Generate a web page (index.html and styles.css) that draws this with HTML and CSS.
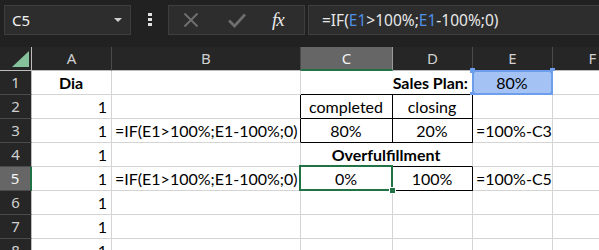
FILE: index.html
```html
<!DOCTYPE html>
<html lang="en">
<head>
  <meta charset="UTF-8">
  <title>Sales Plan</title>
  <link rel="stylesheet" href="styles.css">
</head>
<body>

<!-- Name box and formula bar -->
<div class="toolbar">
  <div class="namebox">
    <span>C5</span>
    <span class="caret"></span>
  </div>
  <div class="grip"><i></i><i></i><i></i></div>
  <div class="fx-buttons">
    <svg width="16" height="14" viewBox="0 0 16 14"><path d="M1.5 0.5 L14.5 13.5 M14.5 0.5 L1.5 13.5" stroke="#6e6e6e" stroke-width="2" fill="none"/></svg>
    <svg width="18" height="15" viewBox="0 0 18 15"><path d="M1 7.5 L6.5 13 L17 1.5" stroke="#6e6e6e" stroke-width="2.6" fill="none"/></svg>
    <span class="fx">fx</span>
  </div>
  <div class="formula">=IF(<span class="ref">E1</span>&gt;100%;<span class="ref">E1</span>-100%;0)</div>
</div>

<!-- Worksheet -->
<div class="sheet">
  <div class="corner"><svg width="17" height="16" viewBox="0 0 17 16"><polygon points="17,0 17,16 0,16" fill="#86c29b"/></svg></div>
  <div class="col">A</div>
  <div class="col">B</div>
  <div class="col active">C</div>
  <div class="col">D</div>
  <div class="col">E</div>
  <div class="col">F</div>

  <div class="row">1</div>
  <div class="cell bold center">Dia</div>
  <div class="cell"></div>
  <div class="cell bold right span2 bb">Sales Plan:</div>
  <div class="cell center refcell">80%<i class="h tl"></i><i class="h tr"></i><i class="h bl"></i><i class="h br"></i></div>
  <div class="cell"></div>

  <div class="row">2</div>
  <div class="cell right">1</div>
  <div class="cell br"></div>
  <div class="cell center br bb">completed</div>
  <div class="cell center br bb">closing</div>
  <div class="cell"></div>
  <div class="cell"></div>

  <div class="row">3</div>
  <div class="cell right">1</div>
  <div class="cell br">=IF(E1&gt;100%;E1-100%;0)</div>
  <div class="cell center br bb">80%</div>
  <div class="cell center br bb">20%</div>
  <div class="cell">=100%-C3</div>
  <div class="cell"></div>

  <div class="row">4</div>
  <div class="cell right">1</div>
  <div class="cell"></div>
  <div class="cell bold center span2 bb">Overfulfillment</div>
  <div class="cell"></div>
  <div class="cell"></div>

  <div class="row active">5</div>
  <div class="cell right">1</div>
  <div class="cell br">=IF(E1&gt;100%;E1-100%;0)</div>
  <div class="cell center br bb selected">0%<i class="handle"></i></div>
  <div class="cell center br bb">100%</div>
  <div class="cell">=100%-C5</div>
  <div class="cell"></div>

  <div class="row">6</div>
  <div class="cell right">1</div>
  <div class="cell"></div><div class="cell"></div><div class="cell"></div><div class="cell"></div><div class="cell"></div>

  <div class="row">7</div>
  <div class="cell right">1</div>
  <div class="cell"></div><div class="cell"></div><div class="cell"></div><div class="cell"></div><div class="cell"></div>

  <div class="row">8</div>
  <div class="cell right">1</div>
  <div class="cell"></div><div class="cell"></div><div class="cell"></div><div class="cell"></div><div class="cell"></div>
</div>

</body>
</html>
```

FILE: styles.css
```css
body {
  margin: 0;
  width: 599px;
  height: 250px;
  overflow: hidden;
  background-color: #262626;
  font-family: "Noto Sans", sans-serif;
}

/* Top bar */
.toolbar {
  display: flex;
  align-items: flex-start;
  height: 47px;
  padding-top: 5px;
  box-sizing: border-box;
  background-color: #212121;
}

.namebox {
  display: flex;
  align-items: center;
  justify-content: space-between;
  margin-left: 4px;
  width: 127px;
  height: 30px;
  box-sizing: border-box;
  padding: 0 8px 0 7px;
  background-color: #2d2d2d;
  border: 1px solid #3e3e3e;
  color: #f2f2f2;
  font-size: 15px;
}

.caret {
  width: 0;
  height: 0;
  border-left: 4px solid transparent;
  border-right: 4px solid transparent;
  border-top: 4px solid #d0d0d0;
}

.grip {
  display: flex;
  flex-direction: column;
  gap: 2px;
  margin: 8px 16px 0 17px;
}

.grip i {
  display: block;
  width: 4px;
  height: 3px;
  background-color: #e0e0e0;
}

.fx-buttons {
  display: flex;
  align-items: center;
  width: 137px;
  height: 30px;
  box-sizing: border-box;
  padding-left: 14px;
  gap: 29px;
  background-color: #2d2d2d;
  border: 1px solid #3e3e3e;
}

.fx-buttons svg + svg {
  margin-left: 0;
}

.fx {
  margin-left: -3px;
  font-family: "Liberation Serif", serif;
  font-style: italic;
  font-size: 19px;
  color: #e8e8e8;
  letter-spacing: -1px;
}

.formula {
  flex: 1;
  height: 30px;
  margin-left: 3px;
  box-sizing: border-box;
  padding-left: 13px;
  line-height: 28px;
  background-color: #2d2d2d;
  border: 1px solid #3e3e3e;
  border-right: none;
  color: #e8e8e8;
  font-size: 15.5px;
  white-space: nowrap;
}

.ref {
  color: #4f8fe6;
}

/* Worksheet grid */
.sheet {
  display: grid;
  grid-template-columns: 32px 80px 189px 92px 80px 80px 80px;
  grid-auto-rows: 24px;
  width: 633px;
}

.corner,
.col,
.row {
  box-sizing: border-box;
  background-color: #262626;
  color: #d0d0d0;
  font-size: 15px;
}

.corner {
  display: flex;
  align-items: flex-end;
  padding: 0 0 3px 12px;
  border-right: 1px solid #bdbdbd;
  border-bottom: 1px solid #bdbdbd;
}

.col {
  text-align: center;
  line-height: 23px;
  border-right: 1px solid #4a4a4a;
  border-bottom: 1px solid #bdbdbd;
}

.col.active {
  background-color: #666666;
  color: #f4f4f4;
  border-right-color: #9a9a9a;
  border-bottom: 2px solid #217346;
}

.row {
  text-align: center;
  line-height: 23px;
  border-right: 1px solid #bdbdbd;
  border-bottom: 1px solid #4a4a4a;
}

.row.active {
  background-color: #666666;
  color: #f4f4f4;
  border-right: 2px solid #217346;
}

.cell {
  position: relative;
  box-sizing: border-box;
  padding: 0 4px 0 3px;
  background-color: #fff;
  border-right: 1px solid #d4d4d4;
  border-bottom: 1px solid #d4d4d4;
  font-family: Lato, sans-serif;
  font-size: 16px;
  line-height: 24px;
  color: #000;
  white-space: nowrap;
}

.bold { font-weight: bold; }
.center { text-align: center; }
.right { text-align: right; }
.span2 { grid-column: span 2; }
.br { border-right-color: #000; }
.bb { border-bottom-color: #000; }

/* E1 reference highlight */
.refcell {
  background-color: #a4c2f4;
}

.refcell::before {
  content: "";
  position: absolute;
  left: -1px;
  top: -1px;
  right: -1px;
  bottom: -1px;
  border: 2px solid #6d9eeb;
}

.h {
  position: absolute;
  width: 5px;
  height: 5px;
  background-color: #6d9eeb;
}

.tl { left: -3px; top: -3px; }
.tr { right: -3px; top: -3px; }
.bl { left: -3px; bottom: -3px; }
.br.h, .h.br { right: -3px; bottom: -3px; border: none; }

/* C5 selection */
.selected::after {
  content: "";
  position: absolute;
  left: -2px;
  top: -2px;
  right: -1px;
  bottom: -1px;
  border: 2px solid #217346;
}

.handle {
  position: absolute;
  right: -4px;
  bottom: -4px;
  width: 5px;
  height: 5px;
  background-color: #217346;
  border: 1px solid #fff;
  z-index: 1;
}
```
